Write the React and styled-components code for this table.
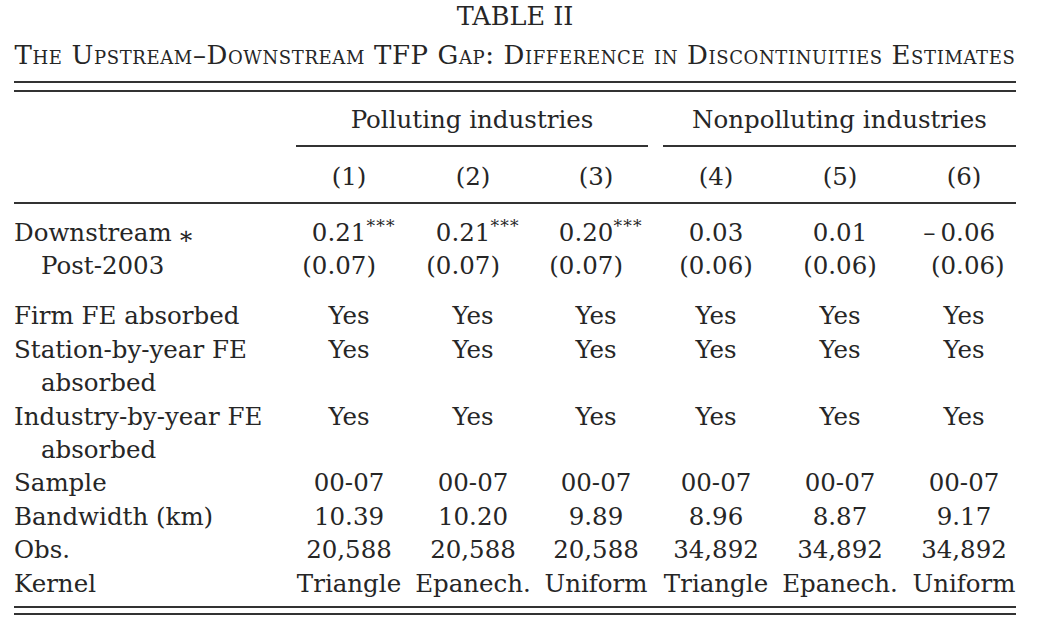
import React from 'react'
import styled, { createGlobalStyle } from 'styled-components'

const GlobalStyle = createGlobalStyle`
  html, body {
    margin: 0;
    padding: 0;
    background: #ffffff;
  }
  body {
    font-family: 'DejaVu Serif', 'Liberation Serif', serif;
    color: #262626;
  }
`

const INK = '#333333'
const LINE = 33.4

const Page = styled.div`
  width: 1002px;
  margin-left: 14px;
  font-size: 24.5px;
`

const Title = styled.div`
  text-align: center;
  font-size: 25.5px;
  line-height: 32px;
  height: 32px;
`

const Subtitle = styled.div`
  margin-top: 7px;
  display: flex;
  justify-content: center;
  font-size: 26px;
  letter-spacing: 0.62px;
  line-height: 32px;
  font-variant: small-caps;
  white-space: nowrap;
`

const DoubleRule = styled.div`
  margin-top: ${(p) => p.$top}px;
  height: ${(p) => p.$gap}px;
  border-top: 2px solid ${INK};
  border-bottom: 2px solid ${INK};
`

const Table = styled.div`
  display: grid;
  grid-template-columns: 273px 124px 124px 122px 118px 130px 118px;
  width: 1009px;
  line-height: ${LINE}px;
`

const GroupHead = styled.div`
  grid-column: ${(p) => p.$span};
  margin: 12px ${(p) => p.$right}px 0 ${(p) => p.$left}px;
  padding-bottom: 9px;
  border-bottom: 2px solid ${INK};
  text-align: center;
  line-height: 32px;
`

const ColNum = styled.div`
  grid-column: ${(p) => p.$col};
  padding-top: 14px;
  text-align: center;
  line-height: 32px;
`

const MidRule = styled.div`
  grid-column: 1 / -1;
  width: 1002px;
  margin-top: 9px;
  height: 2px;
  background: ${INK};
  margin-bottom: ${(p) => p.$gap}px;
`

const Spacer = styled.div`
  grid-column: 1 / -1;
  height: ${(p) => p.$h}px;
`

const Label = styled.div`
  grid-column: 1;
  white-space: nowrap;
`

const LabelLine = styled.div`
  padding-left: ${(p) => (p.$indent ? 27 : 0)}px;
`

const Cell = styled.div`
  text-align: center;
  align-self: start;
  white-space: nowrap;
`

const Dec = styled.div`
  display: inline-grid;
  grid-template-columns: auto auto auto;
  text-align: left;
`

const Pre = styled.span`
  text-align: right;
`

const Num = styled.span`
  text-align: right;
`

const Post = styled.span`
  text-align: left;
`

const Stars = styled.span`
  font-size: 0.7em;
  line-height: 0;
  position: relative;
  top: -0.5em;
  letter-spacing: 1.2px;
`

const Ast = styled.span`
  margin-left: 6px;
  position: relative;
  top: 3px;
`

const BottomRule = styled(DoubleRule)`
  width: 1002px;
`

const coefs = [
  { pre: '', num: '0.21', post: '***', se: '0.07' },
  { pre: '', num: '0.21', post: '***', se: '0.07' },
  { pre: '', num: '0.20', post: '***', se: '0.07' },
  { pre: '', num: '0.03', post: '', se: '0.06' },
  { pre: '', num: '0.01', post: '', se: '0.06' },
  { pre: '–\u2009', num: '0.06', post: '', se: '0.06' },
]

const yes = Array(6).fill('Yes')

const rows = [
  { label: ['Firm FE absorbed'], cells: yes },
  { label: ['Station-by-year FE', 'absorbed'], cells: yes },
  { label: ['Industry-by-year FE', 'absorbed'], cells: yes },
  { label: ['Sample'], cells: Array(6).fill('00-07') },
  { label: ['Bandwidth (km)'], cells: ['10.39', '10.20', '9.89', '8.96', '8.87', '9.17'] },
  { label: ['Obs.'], cells: ['20,588', '20,588', '20,588', '34,892', '34,892', '34,892'] },
  { label: ['Kernel'], cells: ['Triangle', 'Epanech.', 'Uniform', 'Triangle', 'Epanech.', 'Uniform'] },
]

const App = () => {
  return (
    <>
      <GlobalStyle />
      <Page>
        <Title>TABLE II</Title>
        <Subtitle>The Upstream–Downstream TFP Gap: Difference in Discontinuities Estimates</Subtitle>
        <DoubleRule $top={10} $gap={7} />
        <Table>
          <GroupHead $span='2 / 5' $left={9} $right={9}>
            Polluting industries
          </GroupHead>
          <GroupHead $span='5 / 8' $left={6} $right={7}>
            Nonpolluting industries
          </GroupHead>
          {[1, 2, 3, 4, 5, 6].map((n) => (
            <ColNum key={n} $col={n + 1}>
              ({n})
            </ColNum>
          ))}
          <MidRule $gap={12} />

          <Label>
            <LabelLine>
              Downstream<Ast>∗</Ast>
            </LabelLine>
            <LabelLine $indent>Post-2003</LabelLine>
          </Label>
          {coefs.map((c, i) => (
            <Cell key={i}>
              <Dec>
                <Pre>{c.pre}</Pre>
                <Num>{c.num}</Num>
                <Post>{c.post && <Stars>{c.post}</Stars>}</Post>
                <Pre>(</Pre>
                <Num>{c.se}</Num>
                <Post>)</Post>
              </Dec>
            </Cell>
          ))}
          <Spacer $h={16.6} />

          {rows.map((r, i) => (
            <React.Fragment key={i}>
              <Label>
                {r.label.map((t, j) => (
                  <LabelLine key={j} $indent={j > 0}>
                    {t}
                  </LabelLine>
                ))}
              </Label>
              {r.cells.map((v, j) => (
                <Cell key={j}>{v}</Cell>
              ))}
            </React.Fragment>
          ))}
        </Table>
        <BottomRule $top={6} $gap={5} />
      </Page>
    </>
  )
}

export default App
